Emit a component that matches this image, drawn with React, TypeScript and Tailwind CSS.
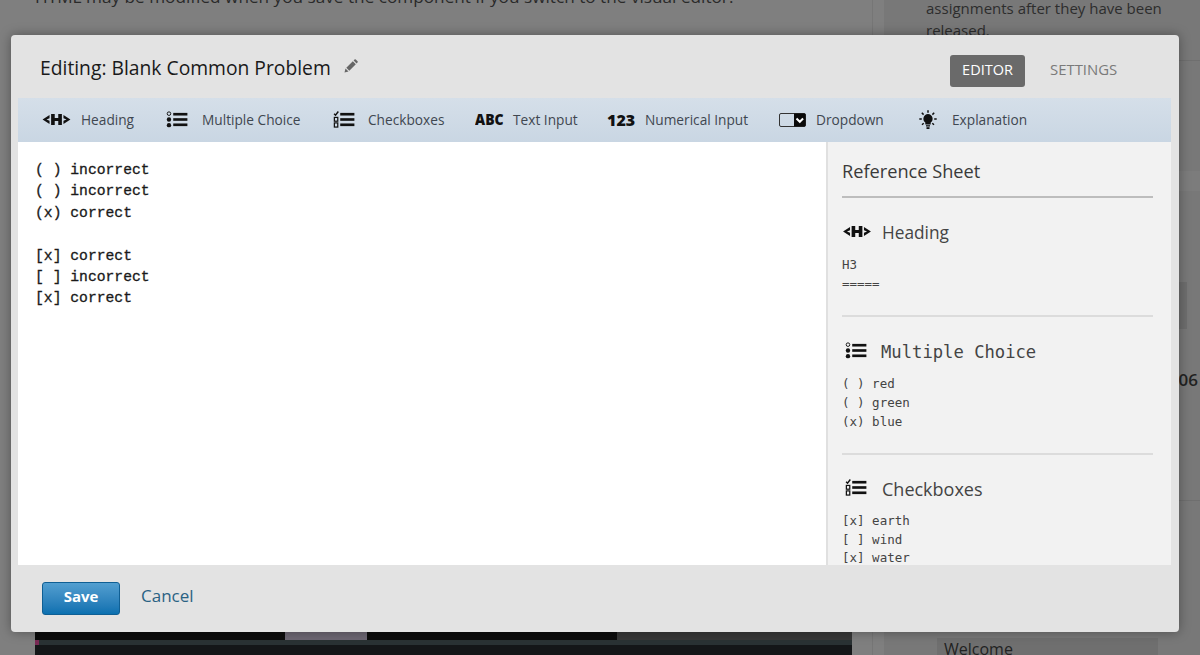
import React from 'react'

const sans = "font-['Open_Sans','Noto_Sans',sans-serif]"

function HeadingIcon({ className }: { className?: string }) {
  return (
    <svg viewBox="0 0 30 14" className={className} fill="currentColor">
      <path d="M0 7 7.500 2.200v3.400L4.200 7l3.300 1.400v3.400z" />
      <path d="M9.200 1h3.900v4.500h3.800V1h3.900v12h-3.900V8.500h-3.800V13H9.200z" />
      <path d="M30 7 22.500 11.800V8.400L25.800 7 22.500 5.600V2.200z" />
    </svg>
  )
}

function ListIcon({ className }: { className?: string }) {
  return (
    <svg viewBox="0 0 22 18" className={className} fill="currentColor">
      <circle cx="2.500" cy="2.800" r="1.900" fill="none" stroke="currentColor" strokeWidth="1" />
      <circle cx="2.500" cy="9" r="2.300" />
      <circle cx="2.500" cy="15" r="2.300" />
      <rect x="7" y="2" width="15" height="2.800" />
      <rect x="7" y="7.600" width="15" height="2.800" />
      <rect x="7" y="13.200" width="15" height="2.800" />
    </svg>
  )
}

function CheckListIcon({ className }: { className?: string }) {
  return (
    <svg viewBox="0 0 22 18" className={className} fill="currentColor">
      <path d="M0.500 3 2 4.500 5 0.500" fill="none" stroke="currentColor" strokeWidth="1.500" />
      <rect x="0.800" y="6.800" width="3.600" height="4" fill="none" stroke="currentColor" strokeWidth="1.300" />
      <rect x="0.800" y="12.600" width="3.600" height="4.400" fill="none" stroke="currentColor" strokeWidth="1.300" />
      <rect x="7" y="2" width="15" height="2.800" />
      <rect x="7" y="7.600" width="15" height="2.800" />
      <rect x="7" y="13.200" width="15" height="2.800" />
    </svg>
  )
}

function DropdownIcon({ className }: { className?: string }) {
  return (
    <svg viewBox="0 0 27 14" className={className}>
      <rect x="0.500" y="0.500" width="26" height="13" rx="1.500" fill="none" stroke="#333" />
      <path d="M15 0.500h10.500a1 1 0 0 1 1 1v11a1 1 0 0 1-1 1H15z" fill="#0a0a0a" />
      <path d="m17.500 5.500 3.300 3.300 3.300-3.300" fill="none" stroke="#fff" strokeWidth="2" />
    </svg>
  )
}

function BulbIcon({ className }: { className?: string }) {
  return (
    <svg viewBox="0 0 18 20" className={className} fill="currentColor" stroke="currentColor">
      <path d="M9 4a4.800 4.800 0 0 0-2.700 8.600V14.500h5.400v-1.900A4.800 4.800 0 0 0 9 4z" stroke="none" />
      <rect x="7" y="15.200" width="4" height="1.300" stroke="none" />
      <rect x="7.500" y="17.200" width="3" height="1.800" stroke="none" />
      <path d="M9 0.300v2.400M2.800 2.800l1.800 1.800M15.200 2.800l-1.800 1.800M0.300 9h2.500M15.200 9h2.500M3 14.700l1.700-1.500M15 14.700l-1.700-1.500" strokeWidth="1.500" fill="none" />
    </svg>
  )
}

function PencilIcon({ className }: { className?: string }) {
  return (
    <svg viewBox="0 0 14 14" className={className} fill="currentColor">
      <path d="M0.500 13.500 1.500 9.500 4.500 12.500z" />
      <path d="M2.300 8.700 8.800 2.200 11.800 5.200 5.300 11.700z" />
      <path d="M9.600 1.400 10.500 0.500a0.900 0.900 0 0 1 1.300 0L13.500 2.200a0.900 0.900 0 0 1 0 1.300L12.600 4.400z" />
    </svg>
  )
}

const tools = [
  { label: 'Heading', icon: <HeadingIcon className="h-[13px] w-[29px]" />, labelGap: 'ml-[10px]', width: 'w-[124px]' },
  { label: 'Multiple Choice', icon: <ListIcon className="h-[17px] w-[22px]" />, labelGap: 'ml-[14px]', width: 'w-[167px]' },
  { label: 'Checkboxes', icon: <CheckListIcon className="h-[17px] w-[22px]" />, labelGap: 'ml-[13px]', width: 'w-[142px]' },
  { label: 'Text Input', icon: <span className="w-[28px] origin-left scale-x-[0.9] text-[15.500px] font-extrabold leading-none text-[#111]">ABC</span>, labelGap: 'ml-[10px]', width: 'w-[132px]' },
  { label: 'Numerical Input', icon: <span className="w-[28px] text-[16px] font-extrabold leading-none text-[#111]">123</span>, labelGap: 'ml-[10px]', width: 'w-[172px]' },
  { label: 'Dropdown', icon: <DropdownIcon className="h-[14px] w-[27px]" />, labelGap: 'ml-[10px]', width: 'w-[140px]' },
  { label: 'Explanation', icon: <BulbIcon className="h-[20px] w-[18px]" />, labelGap: 'ml-[15px]', width: '' },
]

function Divider({ dark }: { dark?: boolean }) {
  return <div className={dark ? 'h-[2px] bg-[#bdbdbd]' : 'h-[2px] bg-[#dcdcdc]'} />
}

export default function App() {
  return (
    <div className={`relative h-[655px] w-[1200px] overflow-hidden bg-[#7f7f7f] ${sans}`}>
      {/* dimmed page behind the modal */}
      <div className="flex h-full">
        <div className="flex w-[873px] shrink-0 flex-col justify-between border-r border-[#767676] pl-[35px] pr-[20px]">
          <p className="-mt-[13px] whitespace-nowrap text-[17.200px] leading-[20px] text-[#2a2a2a]">
            HTML may be modified when you save the component if you switch to the visual editor.
          </p>
          <div className="flex h-[23px] flex-col bg-[#0c0c0c]">
            <div className="flex h-[8px] shrink-0 pl-[250px]">
              <div className="w-[82px] bg-[#6d6773]" />
              <div className="ml-[250px] w-[235px] bg-[#383838]" />
            </div>
            <div className="h-[5px] shrink-0 bg-[#2a3234]">
              <div className="h-[5px] w-[4px] bg-[#7a2a55]" />
            </div>
            <div className="flex-1 bg-[#141618]" />
          </div>
        </div>
        <div className="ml-[11px] flex flex-1 flex-col bg-[#787878] pl-[42px]">
          <p className="-mt-[3px] w-[250px] text-[15px] leading-[22px] text-[#2d2d2d]">
            assignments after they have been released.
          </p>
          <div className="mt-[19px] h-px bg-[#6f6f6f]" />
          <div className="mt-[110px] h-[20px] bg-[#7c7c7c]" />
          <div className="ml-auto mt-[91px] mr-[13px] h-[47px] w-[20px] bg-[#6e6e6e]" />
          <p className="ml-auto mt-[39px] mr-[2px] text-[17px] font-semibold leading-[24px] text-[#222]">006</p>
          <div className="mt-[108px] h-px bg-[#6f6f6f]" />
          <div className="mt-auto ml-[11px] h-[17px] w-[221px] bg-[#6f6f6f] pl-[7px] text-[16px] leading-[22px] text-[#222]">
            Welcome
          </div>
        </div>
      </div>

      {/* modal */}
      <div className="absolute top-[35px] left-[11px] flex h-[597px] w-[1168px] flex-col rounded-[4px] bg-[#e3e3e3] shadow-[0_0_12px_rgba(0,0,0,0.35)]">
        <header className="flex h-[63px] shrink-0 items-center pl-[29px] pr-[60px] pt-[3px]">
          <h1 className="text-[19.300px] leading-[28px] text-[#1a1a1a]">Editing: Blank Common Problem</h1>
          <PencilIcon className="ml-[13px] h-[14px] w-[14px] -translate-y-[2px] text-[#666]" />
          <div className="ml-auto mt-[5px] flex items-center">
            <span className="flex h-[32px] w-[75px] items-center justify-center rounded-[3px] bg-[#6a6a6a] pb-[2px] text-[14.500px] font-medium text-white">
              EDITOR
            </span>
            <span className="ml-[25px] w-[69px] whitespace-nowrap pb-[2px] text-[14.900px] text-[#7a7a7a]">SETTINGS</span>
          </div>
        </header>

        <div className="ml-[7px] mr-[8px] flex min-h-0 flex-1 flex-col">
          <div className="flex h-[44px] shrink-0 items-center bg-gradient-to-b from-[#d5dfe9] to-[#c9d6e3] pl-[24px] text-[#111]">
            {tools.map((tool) => (
              <div key={tool.label} className={`flex items-center ${tool.width}`}>
                {tool.icon}
                <span className={`${tool.labelGap} text-[13.700px] text-[#3f4750]`}>{tool.label}</span>
              </div>
            ))}
          </div>

          <div className="flex min-h-0 flex-1">
            <pre className="flex-1 bg-white pt-[18px] pl-[17px] font-['Liberation_Mono',monospace] text-[14.700px] leading-[21.400px] text-[#1a1a1a] [-webkit-text-stroke:0.3px_#1a1a1a]">
              {'( ) incorrect\n( ) incorrect\n(x) correct\n\n[x] correct\n[ ] incorrect\n[x] correct'}
            </pre>
            <aside className="w-[345px] shrink-0 overflow-hidden border-l-[2px] border-[#e0e0e0] bg-[#f2f2f2] pl-[14px] pr-[18px] pt-[17px]">
              <h2 className="text-[18.200px] leading-[25px] text-[#3a3a3a]">Reference Sheet</h2>
              <div className="mt-[12px]"><Divider dark /></div>

              <div className="mt-[22px] flex h-[25px] items-center pl-px">
                <HeadingIcon className="-mt-[3px] h-[13px] w-[28px] text-[#111]" />
                <span className="ml-[11px] text-[17.300px] text-[#444]">Heading</span>
              </div>
              <pre className="mt-[10px] font-['DejaVu_Sans_Mono',monospace] text-[12.500px] leading-[19px] text-[#444]">
                {'H3\n====='}
              </pre>
              <div className="mt-[22px]"><Divider /></div>

              <div className="mt-[23px] flex h-[25px] items-center pl-[3px]">
                <ListIcon className="-mt-[4px] h-[17px] w-[22px] text-[#111]" />
                <span className="ml-[14px] font-['DejaVu_Sans_Mono',monospace] text-[17.200px] text-[#444]">Multiple Choice</span>
              </div>
              <pre className="mt-[9px] font-['DejaVu_Sans_Mono',monospace] text-[12.500px] leading-[19px] text-[#444]">
                {'( ) red\n( ) green\n(x) blue'}
              </pre>
              <div className="mt-[22px]"><Divider /></div>

              <div className="mt-[22px] flex h-[25px] items-center pl-[3px]">
                <CheckListIcon className="-mt-[4px] h-[17px] w-[22px] text-[#111]" />
                <span className="ml-[15px] text-[18px] text-[#444]">Checkboxes</span>
              </div>
              <pre className="mt-[10px] font-['DejaVu_Sans_Mono',monospace] text-[12.500px] leading-[18.700px] text-[#444]">
                {'[x] earth\n[ ] wind\n[x] water'}
              </pre>
            </aside>
          </div>
        </div>

        <footer className="flex h-[67px] shrink-0 items-center pl-[31px]">
          <button className="h-[33px] w-[78px] rounded-[3px] border border-[#0f5f94] bg-gradient-to-b from-[#529fd0] to-[#0a70b0] pb-[4px] text-[15px] font-bold text-white">
            Save
          </button>
          <a className="ml-[21px] pb-[5px] text-[17px] text-[#2a6283]">Cancel</a>
        </footer>
      </div>
    </div>
  )
}
